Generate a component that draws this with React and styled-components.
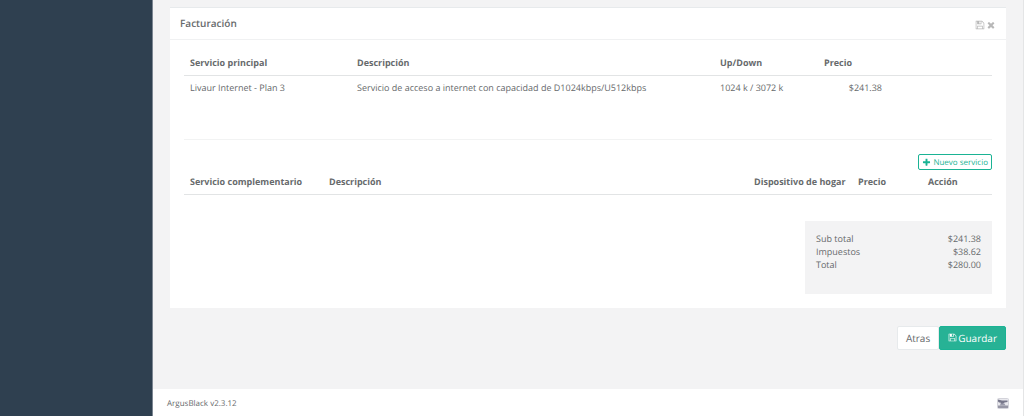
import React from 'react';
import styled, { createGlobalStyle } from 'styled-components';

const GlobalStyle = createGlobalStyle`
  *, *::before, *::after {
    box-sizing: border-box;
  }

  body {
    margin: 0;
    background: #f3f3f4;
    color: #676a6c;
    font-family: 'Open Sans', Arial, sans-serif;
    font-size: 9px;
    line-height: 13px;
    text-rendering: geometricPrecision;
  }

  button {
    font-family: inherit;
    text-rendering: inherit;
    cursor: pointer;
  }
`;

const Wrapper = styled.div`
  display: flex;
  min-height: 100vh;
  border-right: 1px solid #e4e5e6;
`;

const Sidebar = styled.aside`
  flex: 0 0 153px;
  background: #2f4050;
  border-right: 1px solid #7c8692;
`;

const Page = styled.div`
  flex: 1;
  min-width: 0;
  display: flex;
  flex-direction: column;
`;

const Content = styled.main`
  flex: 1;
  padding: 7px 17px 39px;
`;

const Panel = styled.section`
  background: #fff;
  border-top: 1px solid #e7eaec;
`;

const PanelHeader = styled.header`
  display: flex;
  align-items: center;
  justify-content: space-between;
  height: 32px;
  padding: 0 10px;
  border-bottom: 1px solid #f0f1f2;
`;

const PanelTitle = styled.h5`
  margin: 0;
  font-size: 10px;
  font-weight: 600;
`;

const PanelTools = styled.div`
  display: flex;
  gap: 1px;
  padding-top: 2px;
`;

const ToolButton = styled.button`
  display: flex;
  padding: 0;
  border: 0;
  background: none;
  color: #b8b8b8;
`;

const PanelBody = styled.div`
  padding: 14px;
`;

const Table = styled.table`
  width: 100%;
  table-layout: fixed;
  border-collapse: collapse;
`;

const Col = styled.col`
  width: ${({ $width }) => ($width ? `${$width}px` : 'auto')};
`;

const Th = styled.th`
  height: ${({ $short }) => ($short ? '24px' : '21px')};
  padding: 0 5px ${({ $short }) => ($short ? '0' : '3px')} 6px;
  border-bottom: 1px solid #e2e4e5;
  text-align: left;
  font-weight: 700;
  white-space: nowrap;
`;

const Td = styled.td`
  height: 25px;
  padding: 0 5px 0 6px;
  text-align: ${({ $right }) => ($right ? 'right' : 'left')};
  white-space: nowrap;
`;

const Divider = styled.hr`
  margin: 39px 0 14px;
  border: 0;
  border-top: 1px solid #f2f3f3;
`;

const Actions = styled.div`
  display: flex;
  justify-content: flex-end;
`;

const SmallButton = styled.button`
  display: flex;
  align-items: center;
  gap: 2px;
  height: 16px;
  padding: 0 3px;
  border: 1px solid #1ab394;
  border-radius: 2px;
  background: #fff;
  color: #1ab394;
  font-size: 8px;
  line-height: 13px;
`;

const Summary = styled.dl`
  width: 187px;
  min-height: 73px;
  margin: 26px 0 0 auto;
  padding: 11px;
  background: #f3f3f4;
`;

const SummaryRow = styled.div`
  display: flex;
  justify-content: space-between;

  dd {
    margin: 0;
  }
`;

const FormActions = styled.div`
  display: flex;
  justify-content: flex-end;
  margin-top: 18px;
`;

const Button = styled.button`
  display: flex;
  align-items: center;
  gap: 1px;
  height: 24px;
  padding: 0 8px;
  border: 1px solid ${({ $primary }) => ($primary ? '#1ab394' : '#e7eaec')};
  border-radius: 2px;
  background: ${({ $primary }) => ($primary ? '#27b295' : '#fff')};
  color: ${({ $primary }) => ($primary ? '#fff' : '#676a6c')};
  font-size: 10px;
`;

const Footer = styled.footer`
  display: flex;
  align-items: center;
  justify-content: space-between;
  height: 27px;
  padding: 2px 14px 0;
  background: #fff;
  font-size: 8px;
`;

const ICONS = {
  save:
    'M512 1536h768v-384h-768v384zm896 0h128v-896q0-14-10-38.5t-20-34.5l-281-281q-10-10-34-20t-39-10v416q0 40-28 68t-68 28h-576q-40 0-68-28t-28-68v-416h-128v1280h128v-416q0-40 28-68t68-28h832q40 0 68 28t28 68v416zm-384-928v-320q0-13-9.5-22.5t-22.5-9.5h-192q-13 0-22.5 9.5t-9.5 22.5v320q0 13 9.5 22.5t22.5 9.5h192q13 0 22.5-9.5t9.5-22.5zm640 32v928q0 40-28 68t-68 28h-1344q-40 0-68-28t-28-68v-1344q0-40 28-68t68-28h928q40 0 88 20t76 48l280 280q28 28 48 76t20 88z',
  times:
    'M1490 1322q0 40-28 68l-136 136q-28 28-68 28t-68-28l-294-294-294 294q-28 28-68 28t-68-28l-136-136q-28-28-28-68t28-68l294-294-294-294q-28-28-28-68t28-68l136-136q28-28 68-28t68 28l294 294 294-294q28-28 68-28t68 28l136 136q28 28 28 68t-28 68l-294 294 294 294q28 28 28 68z',
  plus:
    'M1600 736v192q0 40-28 68t-68 28h-416v416q0 40-28 68t-68 28h-192q-40 0-68-28t-28-68v-416h-416q-40 0-68-28t-28-68v-192q0-40 28-68t68-28h416v-416q0-40 28-68t68-28h192q40 0 68 28t28 68v416h416q40 0 68 28t28 68z',
};

const Icon = ({ name, size }) => (
  <svg width={size} height={size} viewBox="0 0 1792 1792" fill="currentColor" aria-hidden="true">
    <path d={ICONS[name]} />
  </svg>
);

const BrandIcon = () => (
  <svg width="12" height="11" viewBox="0 0 12 11" aria-hidden="true">
    <rect x="0.5" y="0.5" width="11" height="10" rx="1" fill="#e9e9ee" stroke="#d3d3da" />
    <path d="M1 1.500l4 1h5.500v1.500l-3 .5L6 6H4L3.500 4.500H2L1 3.500z" fill="#77778a" />
    <path d="M3.500 5.500h4L8.500 7.500H3z" fill="#9a9aaa" />
    <path d="M1 7.500h10V10H1z" fill="#9696a5" />
  </svg>
);

const services = [
  {
    name: 'Livaur Internet - Plan 3',
    description: 'Servicio de acceso a internet con capacidad de D1024kbps/U512kbps',
    speed: '1024 k / 3072 k',
    price: '$241.38',
  },
];

const totals = [
  { label: 'Sub total', amount: '$241.38' },
  { label: 'Impuestos', amount: '$38.62' },
  { label: 'Total', amount: '$280.00' },
];

const MainServices = () => (
  <Table>
    <colgroup>
      <Col $width={167} />
      <Col />
      <Col $width={104} />
      <Col $width={69} />
      <Col $width={105} />
    </colgroup>
    <thead>
      <tr>
        <Th>Servicio principal</Th>
        <Th>Descripción</Th>
        <Th>Up/Down</Th>
        <Th>Precio</Th>
        <Th />
      </tr>
    </thead>
    <tbody>
      {services.map(({ name, description, speed, price }) => (
        <tr key={name}>
          <Td>{name}</Td>
          <Td>{description}</Td>
          <Td>{speed}</Td>
          <Td $right>{price}</Td>
          <Td />
        </tr>
      ))}
    </tbody>
  </Table>
);

const ExtraServices = () => (
  <Table>
    <colgroup>
      <Col $width={139} />
      <Col />
      <Col $width={104} />
      <Col $width={70} />
      <Col $width={70} />
    </colgroup>
    <thead>
      <tr>
        <Th $short>Servicio complementario</Th>
        <Th $short>Descripción</Th>
        <Th $short>Dispositivo de hogar</Th>
        <Th $short>Precio</Th>
        <Th $short>Acción</Th>
      </tr>
    </thead>
  </Table>
);

const App = () => (
  <>
    <GlobalStyle />
    <Wrapper>
      <Sidebar />
      <Page>
        <Content>
          <Panel>
            <PanelHeader>
              <PanelTitle>Facturación</PanelTitle>
              <PanelTools>
                <ToolButton type="button" aria-label="Guardar facturación">
                  <Icon name="save" size={10} />
                </ToolButton>
                <ToolButton type="button" aria-label="Cerrar">
                  <Icon name="times" size={10} />
                </ToolButton>
              </PanelTools>
            </PanelHeader>
            <PanelBody>
              <MainServices />
              <Divider />
              <Actions>
                <SmallButton type="button">
                  <Icon name="plus" size={9} />
                  Nuevo servicio
                </SmallButton>
              </Actions>
              <ExtraServices />
              <Summary>
                {totals.map(({ label, amount }) => (
                  <SummaryRow key={label}>
                    <dt>{label}</dt>
                    <dd>{amount}</dd>
                  </SummaryRow>
                ))}
              </Summary>
            </PanelBody>
          </Panel>
          <FormActions>
            <Button type="button">Atras</Button>
            <Button type="submit" $primary>
              <Icon name="save" size={9} />
              Guardar
            </Button>
          </FormActions>
        </Content>
        <Footer>
          <span>ArgusBlack v2.3.12</span>
          <BrandIcon />
        </Footer>
      </Page>
    </Wrapper>
  </>
);

export default App;
